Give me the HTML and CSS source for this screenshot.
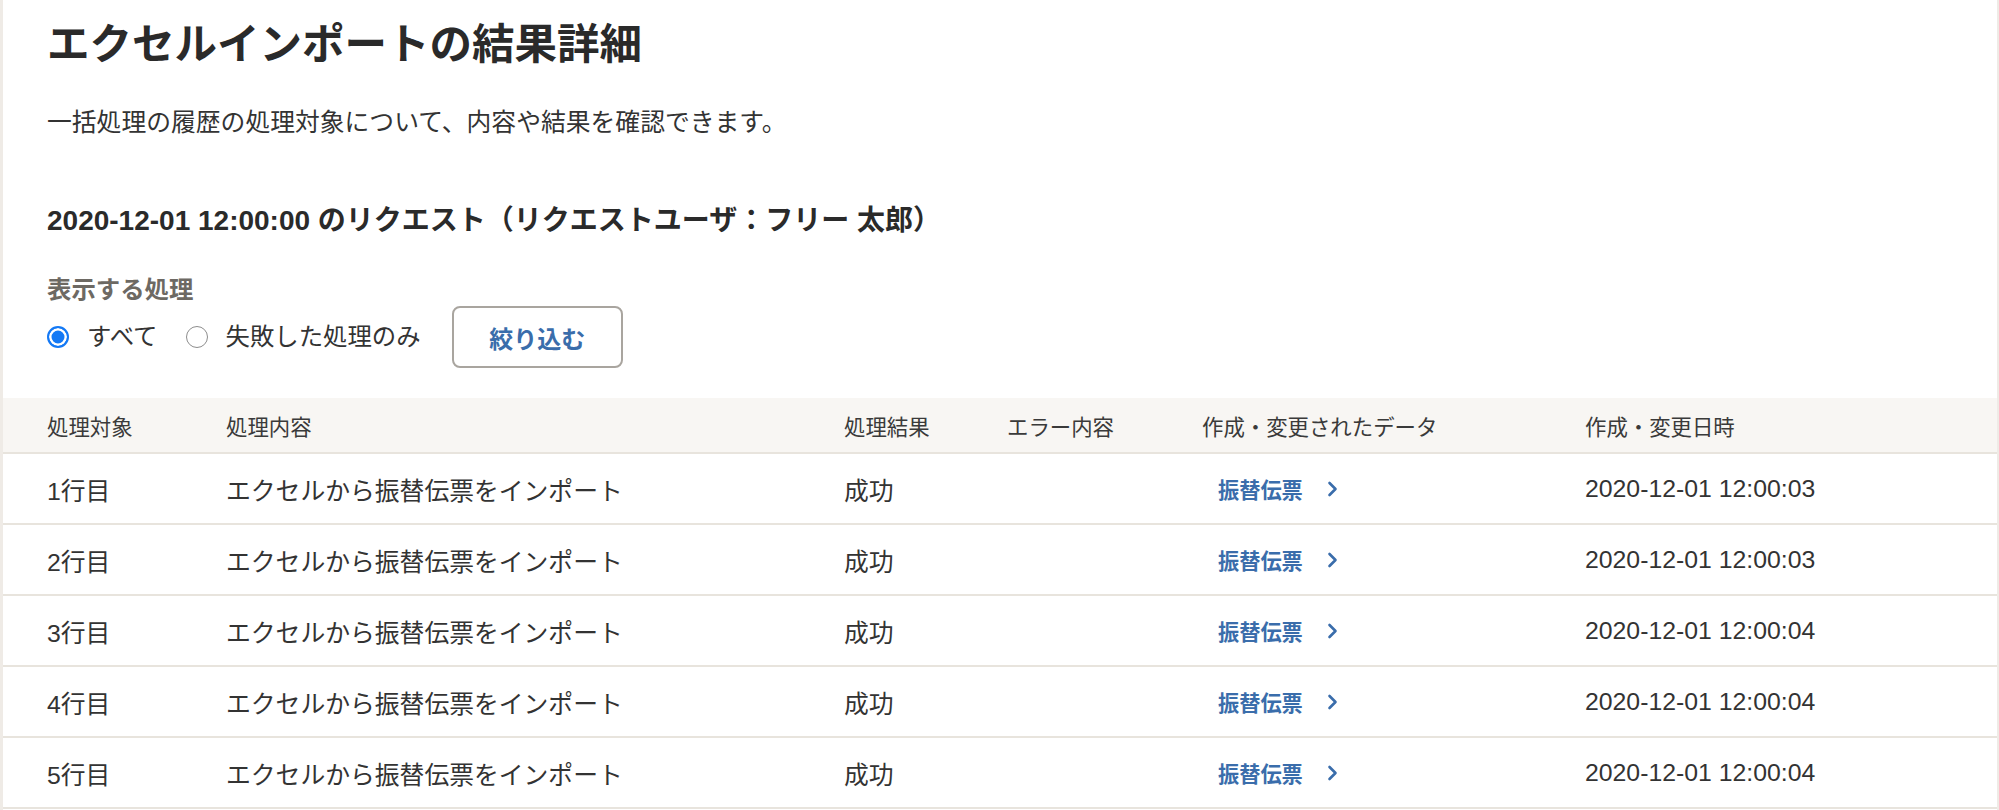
FILE: index.html
```html
<!DOCTYPE html>
<html lang="ja">
<head>
<meta charset="utf-8">
<title>エクセルインポートの結果詳細</title>
<link rel="stylesheet" href="styles.css">
</head>
<body>
<div class="page">
  <h1 class="title">エクセルインポートの結果詳細</h1>
  <p class="desc">一括処理の履歴の処理対象について、内容や結果を確認できます。</p>
  <h2 class="request">2020-12-01 12:00:00 のリクエスト（リクエストユーザ：フリー 太郎）</h2>
  <div class="filter">
    <div class="filter-label">表示する処理</div>
    <div class="filter-row">
      <label class="radio"><span class="radio-mark checked"></span><span class="radio-text">すべて</span></label>
      <label class="radio"><span class="radio-mark"></span><span class="radio-text">失敗した処理のみ</span></label>
      <button class="btn" type="button">絞り込む</button>
    </div>
  </div>
  <div class="table">
    <div class="tr thead">
      <div class="cell">処理対象</div>
      <div class="cell">処理内容</div>
      <div class="cell">処理結果</div>
      <div class="cell">エラー内容</div>
      <div class="cell">作成・変更されたデータ</div>
      <div class="cell">作成・変更日時</div>
    </div>
    <div class="tr">
      <div class="cell">1行目</div>
      <div class="cell">エクセルから振替伝票をインポート</div>
      <div class="cell">成功</div>
      <div class="cell"></div>
      <div class="cell"><a class="link" href="#">振替伝票<svg class="chev" viewBox="0 0 11 16" width="11" height="16"><path d="M2.5 2 L8.5 8 L2.5 14" fill="none" stroke="currentColor" stroke-width="2.6" stroke-linecap="round" stroke-linejoin="round"/></svg></a></div>
      <div class="cell">2020-12-01 12:00:03</div>
    </div>
    <div class="tr">
      <div class="cell">2行目</div>
      <div class="cell">エクセルから振替伝票をインポート</div>
      <div class="cell">成功</div>
      <div class="cell"></div>
      <div class="cell"><a class="link" href="#">振替伝票<svg class="chev" viewBox="0 0 11 16" width="11" height="16"><path d="M2.5 2 L8.5 8 L2.5 14" fill="none" stroke="currentColor" stroke-width="2.6" stroke-linecap="round" stroke-linejoin="round"/></svg></a></div>
      <div class="cell">2020-12-01 12:00:03</div>
    </div>
    <div class="tr">
      <div class="cell">3行目</div>
      <div class="cell">エクセルから振替伝票をインポート</div>
      <div class="cell">成功</div>
      <div class="cell"></div>
      <div class="cell"><a class="link" href="#">振替伝票<svg class="chev" viewBox="0 0 11 16" width="11" height="16"><path d="M2.5 2 L8.5 8 L2.5 14" fill="none" stroke="currentColor" stroke-width="2.6" stroke-linecap="round" stroke-linejoin="round"/></svg></a></div>
      <div class="cell">2020-12-01 12:00:04</div>
    </div>
    <div class="tr">
      <div class="cell">4行目</div>
      <div class="cell">エクセルから振替伝票をインポート</div>
      <div class="cell">成功</div>
      <div class="cell"></div>
      <div class="cell"><a class="link" href="#">振替伝票<svg class="chev" viewBox="0 0 11 16" width="11" height="16"><path d="M2.5 2 L8.5 8 L2.5 14" fill="none" stroke="currentColor" stroke-width="2.6" stroke-linecap="round" stroke-linejoin="round"/></svg></a></div>
      <div class="cell">2020-12-01 12:00:04</div>
    </div>
    <div class="tr">
      <div class="cell">5行目</div>
      <div class="cell">エクセルから振替伝票をインポート</div>
      <div class="cell">成功</div>
      <div class="cell"></div>
      <div class="cell"><a class="link" href="#">振替伝票<svg class="chev" viewBox="0 0 11 16" width="11" height="16"><path d="M2.5 2 L8.5 8 L2.5 14" fill="none" stroke="currentColor" stroke-width="2.6" stroke-linecap="round" stroke-linejoin="round"/></svg></a></div>
      <div class="cell">2020-12-01 12:00:04</div>
    </div>
  </div>
</div>
</body>
</html>
```

FILE: styles.css
```css
* { box-sizing: border-box; }

html, body {
  margin: 0;
  padding: 0;
}

body {
  background: #efebe6;
  font-family: "Liberation Sans", "Noto Sans CJK JP", sans-serif;
  color: #323232;
}

.page {
  margin: 0 2px 0 3px;
  background: #ffffff;
  min-height: 100vh;
  padding-top: 13px;
}

.title {
  margin: 0;
  padding-left: 44px;
  font-size: 42.5px;
  line-height: 63px;
  font-weight: 700;
  color: #2a2a2a;
}

.desc {
  margin: 29px 0 0;
  padding-left: 44px;
  font-size: 24.8px;
  line-height: 36px;
  color: #333333;
}

.request {
  margin: 60px 0 0;
  padding-left: 44px;
  font-size: 28px;
  line-height: 40px;
  font-weight: 700;
  color: #2a2a2a;
}

.filter {
  margin-top: 33px;
  padding-left: 44px;
}

.filter-label {
  font-size: 24.4px;
  line-height: 32px;
  font-weight: 700;
  color: #6d6963;
}

.filter-row {
  display: flex;
  align-items: center;
  height: 62px;
}

.radio {
  display: flex;
  align-items: center;
  font-size: 24.4px;
  line-height: 36px;
  color: #333333;
  margin-right: 28px;
}

.radio + .radio + .btn { margin-left: 3px; }

.radio-mark {
  width: 22px;
  height: 22px;
  border-radius: 50%;
  border: 1.5px solid #8d8d8d;
  background: #ffffff;
  margin-right: 18px;
  flex: none;
}

.radio-mark.checked {
  border: 2.5px solid #1479f5;
  background: #1479f5;
  box-shadow: inset 0 0 0 2.5px #ffffff;
}

.btn {
  width: 171px;
  height: 62px;
  border: 2px solid #a9a59f;
  border-radius: 8px;
  background: #ffffff;
  font-family: inherit;
  font-size: 24px;
  font-weight: 700;
  color: #3a6dab;
  padding: 0;
}

.table {
  margin-top: 30px;
}

.tr {
  display: grid;
  grid-template-columns: 179px 618px 163px 195px 383px 1fr;
  padding-left: 44px;
  height: 71px;
  border-bottom: 2px solid #e8e4dd;
  font-size: 24.8px;
  color: #333333;
}

.tr.thead {
  height: 56px;
  background: #f8f6f3;
  font-size: 21.4px;
  color: #3a3a3a;
}

.cell {
  display: flex;
  align-items: center;
  white-space: nowrap;
}

.link {
  display: flex;
  align-items: center;
  padding-left: 16px;
  font-size: 21.2px;
  font-weight: 700;
  color: #3a6dab;
  text-decoration: none;
}

.chev {
  margin-left: 24px;
  display: block;
}
```
